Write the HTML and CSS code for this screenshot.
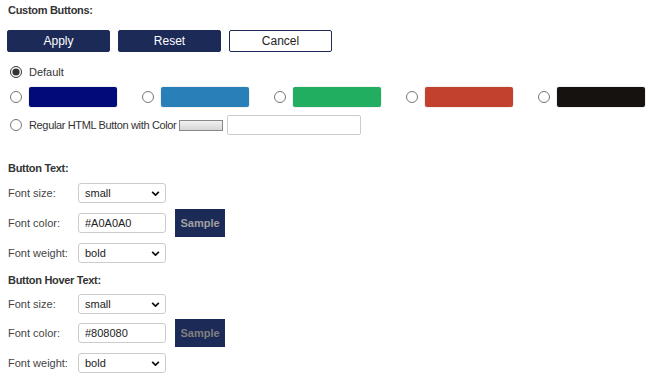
FILE: index.html
```html
<!DOCTYPE html>
<html lang="en">
<head>
<meta charset="UTF-8">
<title>Custom Buttons</title>
<link rel="stylesheet" href="styles.css">
</head>
<body>

<div class="heading top">Custom Buttons:</div>

<div class="btn-row">
  <button class="btn dark">Apply</button>
  <button class="btn dark">Reset</button>
  <button class="btn light">Cancel</button>
</div>

<label class="opt first">
  <input type="radio" name="style" checked>
  <span>Default</span>
</label>

<div class="swatch-row">
  <label class="swatch-item"><input type="radio" name="style"><span class="swatch navy"></span></label>
  <label class="swatch-item"><input type="radio" name="style"><span class="swatch blue"></span></label>
  <label class="swatch-item"><input type="radio" name="style"><span class="swatch green"></span></label>
  <label class="swatch-item"><input type="radio" name="style"><span class="swatch red"></span></label>
  <label class="swatch-item last"><input type="radio" name="style"><span class="swatch black"></span></label>
</div>

<label class="opt regular">
  <input type="radio" name="style">
  <span class="reg-text">Regular HTML Button with Color</span>
  <span class="mini-btn"></span>
  <input type="text" class="color-input">
</label>

<div class="heading section">Button Text:</div>
<div class="group">
  <div class="form-row">
    <span class="lbl">Font size:</span>
    <div class="sel"><select><option>small</option></select><svg viewBox="0 0 10 6" class="chev"><path d="M1 1 L5 5 L9 1" /></svg></div>
  </div>
  <div class="form-row">
    <span class="lbl">Font color:</span>
    <input type="text" class="field" value="#A0A0A0">
    <button class="sample c1">Sample</button>
  </div>
  <div class="form-row">
    <span class="lbl">Font weight:</span>
    <div class="sel"><select><option>bold</option></select><svg viewBox="0 0 10 6" class="chev"><path d="M1 1 L5 5 L9 1" /></svg></div>
  </div>
</div>

<div class="heading section2">Button Hover Text:</div>
<div class="group hover">
  <div class="form-row">
    <span class="lbl">Font size:</span>
    <div class="sel"><select><option>small</option></select><svg viewBox="0 0 10 6" class="chev"><path d="M1 1 L5 5 L9 1" /></svg></div>
  </div>
  <div class="form-row">
    <span class="lbl">Font color:</span>
    <input type="text" class="field" value="#808080">
    <button class="sample c2">Sample</button>
  </div>
  <div class="form-row">
    <span class="lbl">Font weight:</span>
    <div class="sel"><select><option>bold</option></select><svg viewBox="0 0 10 6" class="chev"><path d="M1 1 L5 5 L9 1" /></svg></div>
  </div>
</div>

</body>
</html>
```

FILE: styles.css
```css
body {
  margin: 0;
  padding: 0 8px;
  background-color: #fff;
  font-family: "Liberation Sans", Arial, sans-serif;
  font-size: 11px;
  color: #333;
}
.heading {
  font-weight: bold;
  font-size: 11px;
  color: #333;
  height: 14px;
  line-height: 14px;
  letter-spacing: -0.3px;
}
.top {
  margin-top: 3px;
}
.btn-row {
  display: flex;
  gap: 8px;
  margin-top: 13px;
  margin-left: -1px;
}
.btn {
  width: 103px;
  height: 22px;
  border-radius: 2px;
  font-family: "Liberation Sans", Arial, sans-serif;
  font-size: 12px;
  padding: 0;
  cursor: pointer;
}
.dark {
  background-color: #1c2a57;
  border: 1px solid #1c2a57;
  color: #fff;
}
.light {
  background-color: #fff;
  border: 1px solid #1c2a57;
  color: #222;
}
input[type=radio] {
  width: 12px;
  height: 12px;
  margin: 0;
  flex-shrink: 0;
  accent-color: #333;
}
.opt {
  display: flex;
  align-items: center;
  gap: 7px;
  margin-left: 2px;
  height: 20px;
}
.first {
  margin-top: 10px;
}
.swatch-row {
  display: flex;
  margin-top: 5px;
  margin-left: 2px;
}
.swatch-item {
  display: flex;
  align-items: center;
  gap: 7px;
  width: 132px;
  flex-shrink: 0;
}
.swatch-item.last {
  width: auto;
}
.swatch {
  width: 88px;
  height: 20px;
  border-radius: 2px;
  box-shadow: 0 0 0 1px rgba(0,0,0,0.06);
}
.navy { background-color: #000a78; }
.blue { background-color: #2980b9; }
.green { background-color: #22ae60; }
.red { background-color: #c1402e; }
.black { background-color: #16120f; }
.regular {
  margin-top: 8px;
  gap: 0;
}
.regular input[type=radio] {
  margin-right: 7px;
}
.reg-text {
  letter-spacing: -0.35px;
}
.mini-btn {
  display: inline-block;
  width: 42px;
  height: 9px;
  margin-left: 3px;
  border: 1px solid #888;
  background: linear-gradient(#f2f2f2, #d6d6d6);
}
.color-input {
  width: 134px;
  height: 20px;
  box-sizing: border-box;
  margin-left: 4px;
  border: 1px solid #ccc;
  border-radius: 2px;
}
.section {
  margin-top: 26px;
}
.section2 {
  margin-top: 10px;
}
.form-row {
  display: flex;
  align-items: center;
  height: 20px;
  margin-top: 10px;
}
.group .form-row:first-child {
  margin-top: 8px;
}
.hover .form-row:first-child {
  margin-top: 7px;
}
.hover .form-row:nth-child(2) {
  margin-top: 9px;
}
.lbl {
  width: 70px;
  color: #444;
}
.sel {
  position: relative;
  width: 88px;
  height: 20px;
}
.sel select {
  appearance: none;
  width: 100%;
  height: 100%;
  border: 1px solid #ccc;
  border-radius: 3px;
  background: #fff;
  padding: 0 6px;
  font-family: "Liberation Sans", Arial, sans-serif;
  font-size: 11px;
  color: #222;
}
.chev {
  position: absolute;
  right: 6px;
  top: 8px;
  width: 9px;
  height: 5px;
  pointer-events: none;
}
.chev path {
  fill: none;
  stroke: #111;
  stroke-width: 2;
}
.field {
  width: 88px;
  height: 20px;
  box-sizing: border-box;
  border: 1px solid #ccc;
  border-radius: 3px;
  padding: 0 6px;
  font-family: "Liberation Sans", Arial, sans-serif;
  font-size: 11px;
  color: #222;
}
.sample {
  width: 50px;
  height: 28px;
  margin-left: 9px;
  background-color: #1c2a57;
  border: 1px solid #1c2a57;
  font-family: "Liberation Sans", Arial, sans-serif;
  font-weight: bold;
  font-size: 11px;
  padding: 0;
}
.c1 { color: #a0a0a0; }
.c2 { color: #808080; }
```
